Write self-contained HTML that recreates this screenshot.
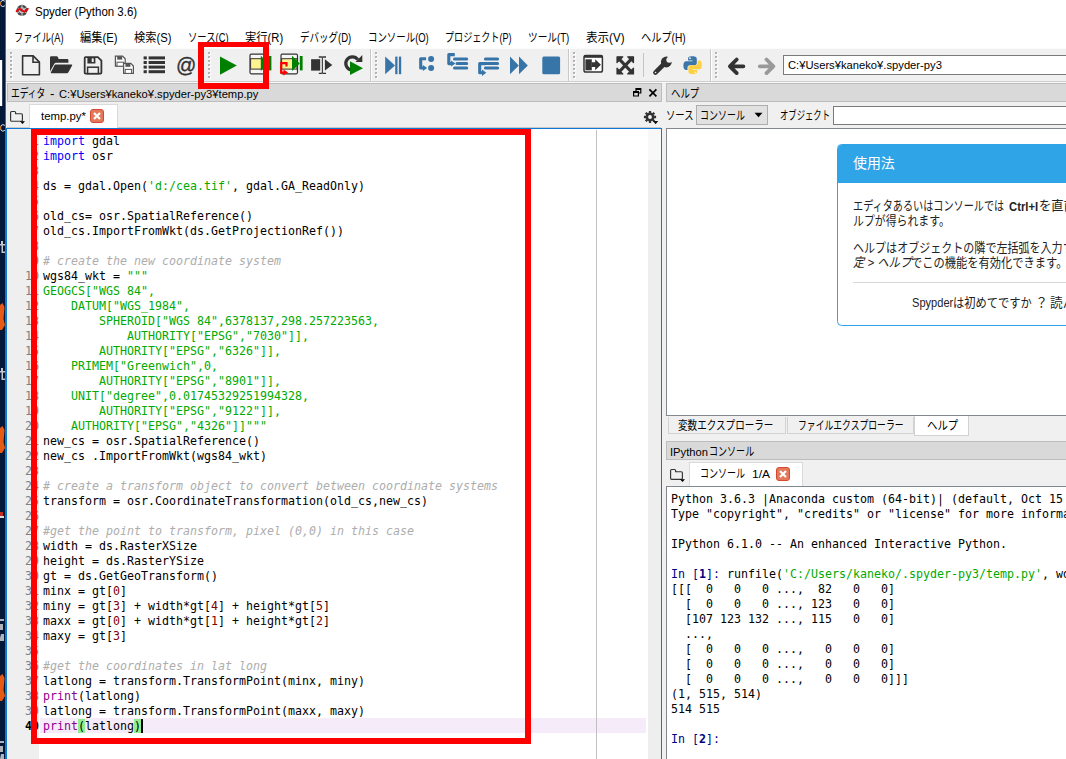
<!DOCTYPE html>
<html lang="ja">
<head>
<meta charset="utf-8">
<title>Spyder (Python 3.6)</title>
<style>
*{box-sizing:border-box;margin:0;padding:0}
html,body{width:1066px;height:759px;overflow:hidden;background:#fff}
body{position:relative;font-family:"Liberation Sans","Noto Sans CJK JP",sans-serif;font-size:12px;color:#000}
.abs,.f{position:absolute}
.f{white-space:nowrap;transform-origin:0 50%;line-height:16px;height:16px;font-size:12px}
#desk{left:0;top:0;width:5px;height:759px;background:#04183a}
#wborder{left:5px;top:0;width:1.100px;height:759px;background:#0a7ad8}
#title{left:7px;top:0;width:1059px;height:27px;background:#fff}
#menu{left:7px;top:27px;width:1059px;height:21px;background:#fff}
#tb{left:6px;top:48px;width:1060px;height:35px;background:#f0f0f0;border-top:1px solid #fbfbfb;border-bottom:1px solid #f8f8f8}
#tb:after{content:"";position:absolute;left:0;right:0;bottom:0;height:1px;background:#cdcdcd}
.dock{position:absolute;background:#d9d9d9;border:1px solid #bdbdbd;height:18px}
.handle{position:absolute;top:52px;width:3px;height:27px;background:repeating-linear-gradient(to bottom,#b2b2b2 0,#b2b2b2 2px,transparent 2px,transparent 4px) 0 0/2px 100% no-repeat,repeating-linear-gradient(to bottom,#fff 0,#fff 2px,transparent 2px,transparent 4px) 1px 1px/2px 100% no-repeat}
.sep{position:absolute;top:49px;width:1px;height:32px;background:#c8c8c8;box-shadow:1px 0 0 #fff}
.mono{font-family:"DejaVu Sans Mono","Liberation Mono","Noto Sans CJK JP",monospace;font-size:11.63px;line-height:15px;white-space:pre}
.ico{position:absolute;overflow:visible}
.kw{color:#0000ff}.st{color:#00aa00}.cm{color:#adadad;font-style:italic}.nu{color:#800000}.bi{color:#900090}
.tab{position:absolute;background:#fff;border:1px solid #dadada;border-bottom:none}
.xbtn{position:absolute;width:14px;height:14px;background:#e4785a;border:1.300px solid #d8482f;border-radius:3px}
.pm{background:#90ee90}.cur{display:inline-block;width:1.500px;height:14px;background:#000;vertical-align:-3px}
.pr{color:#000080}
.red{position:absolute;border:6px solid #ff0000}
</style>
</head>
<body>
<div id="desk" class="abs"></div>
<div id="wborder" class="abs"></div>
<!-- desktop strip details -->
<svg class="ico" style="left:0;top:0" width="6" height="759" viewBox="0 0 6 759">
<g fill="#e8e8e8">
<path d="M4.800 1.200a2.800 3 0 1 0 0 4.600" fill="none" stroke="#e4e6ea" stroke-width="1"/><rect x="0" y="2" width="1.200" height="3" fill="#c9781f"/>
<rect x="0" y="60" width="2.200" height="46" fill="#fdfdfd"/>
<path d="M4.800 125.400a2.800 3.200 0 1 0 0 5" fill="none" stroke="#e4e6ea" stroke-width="1"/><rect x="0" y="126" width="1.200" height="3.600" fill="#c9781f"/>
<path d="M1 241h2v3h2v1.500h-2v6h2v1.500h-3.500v-7.500h-1.500v-1.500h1z" opacity=".85"/>
<path d="M1 368h2v3h2v1.500h-2v6h2v1.500h-3.500v-7.500h-1.500v-1.500h1z" opacity=".85"/>
<path d="M0 619h4v2h-4zM0 624h3v6h-3zM1 634h3v7h-4v-3z" opacity=".75"/>
<path d="M0 741h4v2h-4zM0 746h3v6h-3zM1 754h3v5h-4z" opacity=".75"/>
</g>
<g fill="#e55a14">
<path d="M0 305l2.500-2l2 4l-1 12l1.500 6l-3 5h-2z"/>
<path d="M0 428l2.500-2l2 4l-1 12l1.500 6l-3 5h-2z"/>
<path d="M0 676l2.500-2l2 4l-1 12l1.500 6l-3 5h-2z"/>
</g>
<rect x="0" y="512" width="3" height="4" fill="#c03020"/><rect x="0" y="516" width="4" height="2" fill="#ddd"/>
</svg>
<div id="title" class="abs"></div>
<svg class="ico" style="left:15px;top:3px" width="15" height="15" viewBox="15 3 15 15">
<circle cx="22" cy="10.300" r="5.500" fill="#4a4a4a"/>
<g stroke="#d8d8d8" stroke-width=".9" fill="none"><path d="M22 4.800v11M17.200 7.600l9.600 5.400M17.200 13l9.600-5.400"/><circle cx="22" cy="10.300" r="2.600"/></g>
<path d="M16.600 11.200q2.600-3.800 5.400-.9t5.800-1.600" fill="none" stroke="#e8000c" stroke-width="1.900" stroke-linecap="round"/>
</svg>
<div id="menu" class="abs"></div>
<div id="tb" class="abs"></div>

<!-- toolbar handles / separators -->
<div class="handle" style="left:9.500px"></div>
<div class="handle" style="left:207.600px"></div>
<div class="sep" style="left:370px"></div>
<div class="handle" style="left:375px"></div>
<div class="sep" style="left:568px"></div>
<div class="handle" style="left:573px"></div>
<div class="abs" style="left:643px;top:53px;width:1px;height:24px;background:#c4c4c4"></div>
<div class="sep" style="left:710px"></div>
<div class="handle" style="left:715px"></div>
<svg class="ico" style="left:0;top:48px" width="1066" height="35" viewBox="0 48 1066 35">
<!-- new file -->
<path d="M22.6 55.9h10.6l6.2 6.2v12.6h-16.8z" fill="none" stroke="#333" stroke-width="1.6" stroke-linejoin="round"/>
<path d="M33 56v6.3h6.3" fill="none" stroke="#333" stroke-width="1.6"/>
<!-- open folder -->
<path d="M50 57.5q0-1.2 1.2-1.2h5.4q1 0 1.4 1l0.6 1.6h8.6q1.2 0 1.2 1.2v2.6h-12.2q-1.4 0-2 1.2l-4.2 7.6z" fill="#333"/>
<path d="M55.6 64.4h16q1 0 0.5 1l-3.8 7q-.4.8-1.4.8h-15.5q-1 0-.5-1l3.6-7q.4-.8 1.1-.8z" fill="#333"/>
<!-- save -->
<path d="M85.6 57.1h12.2l3.6 3.6v12q0 .9-.9.9h-14.9q-.9 0-.9-.9v-14.700q0-.9.9-.9z" fill="none" stroke="#333" stroke-width="1.8"/>
<path d="M87.400 57.300h8v6.200h-8z" fill="#333"/>
<rect x="91.700" y="58.400" width="2" height="3.600" fill="#f0f0f0"/>
<rect x="87.600" y="67.200" width="10.800" height="6.400" fill="#f0f0f0" stroke="#333" stroke-width="1.500"/>
<!-- save all -->
<g fill="#fafafa" stroke="#555" stroke-width="1.200">
<path d="M115.400 56.200h7.200l2.600 2.600v7.400h-9.800z"/>
<path d="M123.600 63.400h7.200l2.600 2.600v7.400h-9.800z"/>
</g>
<g fill="#555"><rect x="117.200" y="56.200" width="5" height="3.400"/><rect x="125.400" y="63.400" width="5" height="3.400"/></g>
<g fill="#fff" stroke="#555" stroke-width="1"><rect x="117" y="62.200" width="6.400" height="4"/><rect x="125.200" y="69.400" width="6.400" height="4"/></g>
<!-- list -->
<g fill="#333">
<rect x="143.600" y="56.400" width="3.200" height="3"/><rect x="148.600" y="56.400" width="16.400" height="3"/>
<rect x="143.600" y="61" width="3.200" height="3"/><rect x="148.600" y="61" width="16.400" height="3"/>
<rect x="143.600" y="65.600" width="3.200" height="3"/><rect x="148.600" y="65.600" width="16.400" height="3"/>
<rect x="143.600" y="70.200" width="3.200" height="3"/><rect x="148.600" y="70.200" width="16.400" height="3"/>
</g>
<!-- @ -->
<text x="176" y="72" font-family="Liberation Sans, sans-serif" font-size="20" fill="#333" stroke="#333" stroke-width=".35">@</text>
<!-- run -->
<path d="M220 56.500l16.800 9.100l-16.800 9.100z" fill="#008000"/>
<!-- run cell -->
<rect x="250" y="54.200" width="16.500" height="19.600" rx="1.200" fill="#f6f6f6" stroke="#333" stroke-width="1.200"/>
<rect x="250.600" y="58.700" width="15.300" height="10.400" fill="#fff291" stroke="#333" stroke-width="1"/>
<path d="M260.800 55.800l7.800 7.600l-7.800 7.600z" fill="#008000"/><rect x="268.600" y="56" width="2.800" height="14.400" fill="#008000"/>
<!-- run cell advance -->
<rect x="281" y="54.200" width="16.500" height="19.600" rx="1.200" fill="#f6f6f6" stroke="#333" stroke-width="1.200"/>
<rect x="281.600" y="58.700" width="15.300" height="10.400" fill="#fff291" stroke="#333" stroke-width="1"/>
<path d="M292 55.800l7.800 7.600l-7.800 7.600z" fill="#008000"/><rect x="299.800" y="56" width="2.800" height="14.400" fill="#008000"/>
<path d="M286.500 66.400v-3.300h-5.300v9.500h3" fill="none" stroke="#ff0000" stroke-width="2.200"/>
<path d="M283.500 69.600l4.600 3l-4.600 3z" fill="#ff0000"/>
<!-- run selection -->
<rect x="311.100" y="59.200" width="9.100" height="11.400" fill="#333"/>
<path d="M318.800 57h2.600q1 0 1 .8q0-.8 1-.8h2.600M318.800 73.400h2.600q1 0 1-.8q0 .8 1 .8h2.600" fill="none" stroke="#333" stroke-width="1.300"/>
<path d="M322.400 57.400v15.600" fill="none" stroke="#444" stroke-width="1.200"/>
<path d="M324.900 59.300l7.400 5.650l-7.400 5.650z" fill="#333"/>
<!-- rerun -->
<path d="M357.800 59.600A6.600 6.600 0 1 0 351.250 69.900" fill="none" stroke="#333" stroke-width="3.200"/>
<path d="M362.300 55.100v6.800h-6.800z" fill="#333"/>
<path d="M350 61.200l13 7l-13 6.900z" fill="#008000"/>
<!-- debug -->
<g fill="#3775a9">
<path d="M385.200 56.600l9.800 8.800l-9.800 8.800z"/><rect x="395.200" y="56.600" width="2.300" height="17.600"/><rect x="398.900" y="56.600" width="2.300" height="17.600"/>
<!-- step -->
<circle cx="431.100" cy="59.100" r="3"/><circle cx="431.100" cy="67.900" r="3"/>
<path d="M426.100 58.800h-5.400v9.200h3" fill="none" stroke="#3775a9" stroke-width="3.100" stroke-linejoin="round"/>
<path d="M422.900 64.900l4.300 3.100l-4.300 3.100z"/>
<!-- step into -->
<g stroke="#3775a9" stroke-width="3" stroke-linecap="round"><path d="M454.500 59.100h12.200M457 63.500h9.700M454.500 68h12.200"/></g>
<path d="M454.800 54.600h-6v9h3" fill="none" stroke="#3775a9" stroke-width="3.100" stroke-linejoin="round"/>
<path d="M451.100 60.400l4.300 3.100l-4.300 3.100z"/>
<!-- step return -->
<g stroke="#3775a9" stroke-width="3" stroke-linecap="round"><path d="M485.400 59.100h12.200M485.400 63.500h12.200M485.400 68h12.200"/></g>
<path d="M485.400 63.600h-5.700v9.100h3" fill="none" stroke="#3775a9" stroke-width="3.100" stroke-linejoin="round"/>
<path d="M482 69.500l4.300 3.200l-4.300 3.200z"/>
<!-- continue -->
<path d="M510 56.600l8.800 8.800l-8.800 8.800z"/><path d="M519 56.600l8.800 8.800l-8.800 8.800z"/>
<!-- stop -->
<rect x="542.300" y="56.600" width="17.800" height="17.700" rx="1.500"/>
</g>
<!-- maximize pane -->
<rect x="584" y="55.400" width="18.400" height="16.600" rx="1.800" fill="#fff" stroke="#333" stroke-width="1.500"/>
<rect x="584" y="55" width="18.400" height="2.800" fill="#333"/>
<rect x="585.400" y="59.300" width="6.400" height="11" fill="#333"/>
<path d="M591.500 62.300h3.700v-3l5.700 5.500l-5.700 5.500v-3.400h-3.700z" fill="#333"/>
<!-- fullscreen -->
<g fill="#333" stroke="#333" stroke-width="1.200" stroke-linejoin="round">
<path d="M617 56.800h5.800l-5.800 5.800z"/><path d="M633.500 56.800h-5.800l5.800 5.800z"/><path d="M617 74h5.800l-5.800-5.800z"/><path d="M633.500 74h-5.800l5.800-5.800z"/>
</g>
<path d="M619.500 59.300l11.500 12.200M631 59.300l-11.500 12.200" stroke="#333" stroke-width="3.200" fill="none"/>
<!-- wrench -->
<path d="M655.400 72.600l8.600-8.600" stroke="#333" stroke-width="4.600" stroke-linecap="round" fill="none"/>
<circle cx="666.300" cy="62" r="5.400" fill="#333"/>
<circle cx="669.200" cy="59.800" r="2.900" fill="#f0f0f0"/>
<path d="M669 60l5.400-2.800" stroke="#f0f0f0" stroke-width="5.400" fill="none"/>
<circle cx="655.500" cy="72.500" r=".8" fill="#f0f0f0"/>
<!-- python -->
<path d="M692.400 56.300c-4.400 0-4.300 1.900-4.300 1.900v2.300h4.500v.8h-6.400s-2.800-.3-2.800 4.300s2.500 4.400 2.500 4.400h1.600v-2.300s-.1-2.500 2.500-2.500h4.400s2.400 0 2.400-2.300v-4s.4-2.600-4.400-2.600z" fill="#3b77a8"/>
<circle cx="690" cy="58.200" r=".9" fill="#f0f0f0"/>
<path d="M692.800 74.200c4.400 0 4.300-1.900 4.300-1.900v-2.300h-4.500v-.8h6.400s2.800.3 2.800-4.300s-2.500-4.400-2.500-4.400h-1.600v2.300s.1 2.500-2.500 2.500h-4.400s-2.400 0-2.400 2.300v4s-.4 2.600 4.400 2.600z" fill="#ffd040"/>
<circle cx="695.200" cy="72.300" r=".9" fill="#f0f0f0"/>
<!-- back / forward -->
<path d="M743.400 66.300h-12M736.700 59.500l-6.800 6.800l6.800 6.800" fill="none" stroke="#333" stroke-width="3.800" stroke-linejoin="round" stroke-linecap="round"/>
<path d="M759.800 66.300h12M766.500 59.500l6.800 6.800l-6.800 6.800" fill="none" stroke="#999" stroke-width="3.800" stroke-linejoin="round" stroke-linecap="round"/>
</svg>
<!-- path combobox -->
<div class="abs" style="left:783px;top:55px;width:300px;height:20px;background:#fff;border:1px solid #7a7a7a"></div>

<!-- ===== editor pane ===== -->
<div class="abs" style="left:6px;top:83px;width:1060px;height:676px;background:#f0f0f0"></div>
<div class="dock" style="left:7px;top:83px;width:654.500px;height:18.500px"></div>
<svg class="ico" style="left:630px;top:86px" width="30" height="14" viewBox="630 86 30 14">
<path d="M636 88.700h4.800v4.300h-4.800zM636 89.500h4.800" fill="none" stroke="#000" stroke-width="1.200"/>
<path d="M633.600 91.600h4.800v4.400h-4.800z" fill="#d9d9d9" stroke="#000" stroke-width="1.200"/>
<path d="M633.600 92.300h4.800" stroke="#000" stroke-width="1.400"/>
<path d="M649.400 89.400l7 7M656.400 89.400l-7 7" stroke="#000" stroke-width="1.700"/>
</svg>
<!-- tab row -->
<div class="abs" style="left:7px;top:127.200px;width:654px;height:1px;background:#c9c9c9"></div>
<svg class="ico" style="left:9px;top:109px" width="18" height="16" viewBox="9 109 18 16">
<path d="M11.600 111.500h3q1 0 1 1v1.200h5.800q1 0 1 1v5.600q0 1-1 1h-9.800q-1 0-1-1v-7.800q0-1 1-1z" fill="none" stroke="#333" stroke-width="1.150"/>
<path d="M20 121.200h5l-2.500 2.800z" fill="#000"/>
</svg>
<div class="tab" style="left:29px;top:104px;width:88.500px;height:24.500px"></div>
<div class="xbtn" style="left:90px;top:109px"></div>
<svg class="ico" style="left:90px;top:109px" width="14" height="14" viewBox="0 0 14 14"><path d="M4 4l6 6M10 4l-6 6" stroke="#fff" stroke-width="2.200"/></svg>
<svg class="ico" style="left:643px;top:110px" width="18" height="16" viewBox="643 110 18 16">
<g fill="#333"><circle cx="650" cy="117" r="4.400"/>
<g stroke="#333" stroke-width="2.300"><path d="M650 110.900v12.200M643.900 117h12.200M645.700 112.700l8.600 8.600M654.300 112.700l-8.600 8.600"/></g></g>
<circle cx="650" cy="117" r="1.900" fill="#f4f4f4"/>
<path d="M652.900 121h5.400l-2.700 3.300z" fill="#111"/>
</svg>
<!-- editor body -->
<div class="abs" style="left:6px;top:128px;width:656.200px;height:640px;background:#fff;border-top:1.200px solid #0f7ad6;border-right:1.300px solid #0f7ad6;border-left:1px solid #0f7ad6"></div>
<div class="abs" style="left:7px;top:129.200px;width:32px;height:640px;background:#efefef"></div>
<div class="abs" style="left:40px;top:718px;width:606px;height:15px;background:#f6ebf9"></div>
<div class="abs" style="left:596px;top:129.500px;width:1px;height:640px;background:#c0c0c0"></div>
<div class="abs" style="left:648px;top:129px;width:13px;height:640px;background:#eeeeee"></div>
<div class="abs" style="left:648px;top:129px;width:13px;height:30.500px;background:#f8f8f8"></div>
<pre class="mono abs" style="left:8px;top:134px;width:31px;text-align:right;color:#808080">1
2
3
4
5
6
7
8
9
10
11
12
13
14
15
16
17
18
19
20
21
22
23
24
25
26
27
28
29
30
31
32
33
34
35
36
37
38
39
<b style="color:#000">40</b></pre>
<pre class="mono abs" style="left:43px;top:134px"><span class="kw">import</span> gdal
<span class="kw">import</span> osr

ds = gdal.Open(<span class="st">'d:/cea.tif'</span>, gdal.GA_ReadOnly)

old_cs= osr.SpatialReference()
old_cs.ImportFromWkt(ds.GetProjectionRef())

<span class="cm"># create the new coordinate system</span>
wgs84_wkt = <span class="st">"""</span>
<span class="st">GEOGCS["WGS 84",</span>
<span class="st">    DATUM["WGS_1984",</span>
<span class="st">        SPHEROID["WGS 84",6378137,298.257223563,</span>
<span class="st">            AUTHORITY["EPSG","7030"]],</span>
<span class="st">        AUTHORITY["EPSG","6326"]],</span>
<span class="st">    PRIMEM["Greenwich",0,</span>
<span class="st">        AUTHORITY["EPSG","8901"]],</span>
<span class="st">    UNIT["degree",0.01745329251994328,</span>
<span class="st">        AUTHORITY["EPSG","9122"]],</span>
<span class="st">    AUTHORITY["EPSG","4326"]]"""</span>
new_cs = osr.SpatialReference()
new_cs .ImportFromWkt(wgs84_wkt)

<span class="cm"># create a transform object to convert between coordinate systems</span>
transform = osr.CoordinateTransformation(old_cs,new_cs)

<span class="cm">#get the point to transform, pixel (0,0) in this case</span>
width = ds.RasterXSize
height = ds.RasterYSize
gt = ds.GetGeoTransform()
minx = gt[<span class="nu">0</span>]
miny = gt[<span class="nu">3</span>] + width*gt[<span class="nu">4</span>] + height*gt[<span class="nu">5</span>]
maxx = gt[<span class="nu">0</span>] + width*gt[<span class="nu">1</span>] + height*gt[<span class="nu">2</span>]
maxy = gt[<span class="nu">3</span>]

<span class="cm">#get the coordinates in lat long</span>
latlong = transform.TransformPoint(minx, miny)
<span class="bi">print</span>(latlong)
latlong = transform.TransformPoint(maxx, maxy)
<span class="bi">print</span><span class="pm">(</span>latlong<span class="pm">)</span><span class="cur"></span></pre>

<!-- ===== help pane ===== -->
<div class="dock" style="left:666px;top:83px;width:410px;height:18.500px"></div>
<div class="abs" style="left:696px;top:105px;width:72px;height:20px;background:#e1e1e1;border:1px solid #adadad"></div>
<svg class="ico" style="left:754px;top:112px" width="9" height="6" viewBox="0 0 9 6"><path d="M0.500 .8h8l-4 4.400z" fill="#000"/></svg>
<div class="abs" style="left:833px;top:105.500px;width:250px;height:19.500px;background:#fff;border:1px solid #7a7a7a"></div>
<div class="abs" style="left:666px;top:128px;width:410px;height:288px;background:#fff;border:1px solid #828790"></div>
<div class="abs" style="left:837px;top:144px;width:260px;height:182px;border:1px solid #2fa4e7;border-radius:4.500px;background:#fff;overflow:hidden">
<div style="height:38px;background:#2fa4e7"></div>
</div>
<div class="abs" style="left:853px;top:282px;width:220px;height:1px;background:#d8d8d8"></div>
<!-- bottom tabs -->
<div class="abs" style="left:668px;top:417px;width:117.500px;height:17px;background:#f0f0f0;border:1px solid #d2d2d2;border-top:none"></div>
<div class="abs" style="left:786.500px;top:417px;width:127px;height:17px;background:#f0f0f0;border:1px solid #d2d2d2;border-top:none"></div>
<div class="abs" style="left:913.500px;top:416px;width:55px;height:20px;background:#fff;border:1px solid #d2d2d2;border-top:none"></div>
<!-- ipython console -->
<div class="dock" style="left:666px;top:441.300px;width:410px;height:18.500px"></div>
<svg class="ico" style="left:668.800px;top:467.300px" width="18" height="16" viewBox="9 109 18 16">
<path d="M11.600 111.500h3q1 0 1 1v1.200h5.800q1 0 1 1v5.600q0 1-1 1h-9.800q-1 0-1-1v-7.800q0-1 1-1z" fill="none" stroke="#333" stroke-width="1.150"/>
<path d="M20 121.200h5l-2.500 2.800z" fill="#000"/>
</svg>
<div class="tab" style="left:689px;top:462.200px;width:113.500px;height:24.300px"></div>
<div class="xbtn" style="left:775.500px;top:467px"></div>
<svg class="ico" style="left:775.500px;top:467px" width="14" height="14" viewBox="0 0 14 14"><path d="M4 4l6 6M10 4l-6 6" stroke="#fff" stroke-width="2.200"/></svg>
<div class="abs" style="left:666px;top:486px;width:410px;height:290px;background:#fff;border:1px solid #828790"></div>
<pre class="mono abs" style="left:671px;top:492px">Python 3.6.3 |Anaconda custom (64-bit)| (default, Oct 15 2017, 03:27:45) [MSC v.1900 64 bit (AMD64)]
Type "copyright", "credits" or "license" for more information.

IPython 6.1.0 -- An enhanced Interactive Python.

<span class="pr">In [<b>1</b>]:</span> runfile(<span class="st">'C:/Users/kaneko/.spyder-py3/temp.py'</span>, wdir=<span class="st">'C:/Users/kaneko/.spyder-py3'</span>)
[[[  0   0   0 ...,  82   0   0]
  [  0   0   0 ..., 123   0   0]
  [107 123 132 ..., 115   0   0]
  ...,
  [  0   0   0 ...,   0   0   0]
  [  0   0   0 ...,   0   0   0]
  [  0   0   0 ...,   0   0   0]]]
(1, 515, 514)
514 515

<span class="pr">In [<b>2</b>]:</span> </pre>

<span class="f" id="L0" style="left:35px;top:3.87px;font-size:12.5px;transform:scaleX(0.9189);">Spyder (Python 3.6)</span>
<span class="f" id="L1" style="left:14px;top:30.23px;font-size:12px;transform:scaleX(0.7734);">ファイル(A)</span>
<span class="f" id="L2" style="left:80px;top:30.23px;font-size:12px;transform:scaleX(0.9375);">編集(E)</span>
<span class="f" id="L3" style="left:134px;top:30.23px;font-size:12px;transform:scaleX(0.9375);">検索(S)</span>
<span class="f" id="L4" style="left:188px;top:30.23px;font-size:12px;transform:scaleX(0.7788);">ソース(C)</span>
<span class="f" id="L5" style="left:245px;top:30.23px;font-size:12px;transform:scaleX(0.9390);">実行(R)</span>
<span class="f" id="L6" style="left:300px;top:30.23px;font-size:12px;transform:scaleX(0.7923);">デバッグ(D)</span>
<span class="f" id="L7" style="left:368px;top:30.23px;font-size:12px;transform:scaleX(0.7857);">コンソール(O)</span>
<span class="f" id="L8" style="left:445px;top:30.23px;font-size:12px;transform:scaleX(0.7557);">プロジェクト(P)</span>
<span class="f" id="L9" style="left:528px;top:30.23px;font-size:12px;transform:scaleX(0.8039);">ツール(T)</span>
<span class="f" id="L10" style="left:585.5px;top:30.23px;font-size:12px;transform:scaleX(0.9625);">表示(V)</span>
<span class="f" id="L11" style="left:640.5px;top:30.23px;font-size:12px;transform:scaleX(0.8491);">ヘルプ(H)</span>
<span class="f" id="L12" style="left:788px;top:56.8px;font-size:11.5px;transform:scaleX(0.9747);">C:¥Users¥kaneko¥.spyder-py3</span>
<span class="f" id="L13" style="left:10.8px;top:85.73px;font-size:12px;transform:scaleX(0.7277);">エディタ</span>
<span class="f" id="L14" style="left:49.8px;top:85.73px;font-size:12px;transform:scaleX(1.1000);">-</span>
<span class="f" id="L15" style="left:58.7px;top:85.7px;font-size:11.5px;transform:scaleX(0.9712);">C:¥Users¥kaneko¥.spyder-py3¥temp.py</span>
<span class="f" id="L16" style="left:40.8px;top:107.9px;font-size:11.5px;transform:scaleX(0.9889);">temp.py*</span>
<span class="f" id="L17" style="left:671.2px;top:85.73px;font-size:12px;transform:scaleX(0.7861);">ヘルプ</span>
<span class="f" id="L18" style="left:666px;top:107.63px;font-size:12px;transform:scaleX(0.7771);">ソース</span>
<span class="f" id="L19" style="left:699.5px;top:107.63px;font-size:12px;transform:scaleX(0.7483);">コンソール</span>
<span class="f" id="L20" style="left:779.8px;top:107.63px;font-size:12px;transform:scaleX(0.6944);">オブジェクト</span>
<span class="f" id="L21" style="left:677.8px;top:417.93px;font-size:12px;transform:scaleX(0.7975);">変数エクスプローラー</span>
<span class="f" id="L22" style="left:797.9px;top:417.93px;font-size:12px;transform:scaleX(0.7347);">ファイルエクスプローラー</span>
<span class="f" id="L23" style="left:926.6px;top:417.93px;font-size:12px;transform:scaleX(0.8667);">ヘルプ</span>
<span class="f" id="L24" style="left:670.3px;top:443.9px;font-size:11.5px;transform:scaleX(0.9718);">IPython</span>
<span class="f" id="L25" style="left:708.6px;top:443.93px;font-size:12px;transform:scaleX(0.7533);">コンソール</span>
<span class="f" id="L26" style="left:700.3px;top:466.43px;font-size:12px;transform:scaleX(0.7517);">コンソール</span>
<span class="f" id="L27" style="left:752px;top:466.4px;font-size:11.5px;transform:scaleX(1.0471);">1/A</span>
<span class="f" id="L28" style="left:852.9px;top:155.37px;font-size:14px;transform:scaleX(0.9952);color:#fff;">使用法</span>
<span class="f" id="L29" style="left:852.9px;top:198.4px;font-size:13px;transform:scaleX(0.7789);color:#222;">エディタあるいはコンソールでは</span>
<span class="f" id="L30" style="left:1008.7px;top:198.53px;font-size:12px;transform:scaleX(0.9387);color:#222;"><b>Ctrl+I</b></span>
<span class="f" id="L31" style="left:1039px;top:198.4px;font-size:13px;transform:scaleX(0.9487);color:#222;">を直前</span>
<span class="f" id="L32" style="left:852.9px;top:212.8px;font-size:13px;transform:scaleX(0.8371);color:#222;">ルプが得られます。</span>
<span class="f" id="L33" style="left:852.9px;top:239.7px;font-size:13px;transform:scaleX(0.8486);color:#222;">ヘルプはオブジェクトの隣で左括弧を入力</span>
<span class="f" id="L34" style="left:1062.7px;top:239.7px;font-size:13px;transform:scaleX(0.7923);color:#222;">す</span>
<span class="f" id="L35" style="left:852.9px;top:255.0px;font-size:13px;transform:scaleX(0.8716);color:#222;"><i>定 &gt; ヘルプ</i></span>
<span class="f" id="L36" style="left:911.3px;top:255.0px;font-size:13px;transform:scaleX(0.8657);color:#222;">でこの機能を有効化できます。</span>
<span class="f" id="L37" style="left:912.4px;top:295.23px;font-size:12px;transform:scaleX(0.9222);color:#222;">Spypder</span>
<span class="f" id="L38" style="left:953.4px;top:295.1px;font-size:13px;transform:scaleX(0.8659);color:#222;">は初めてですか</span>
<span class="f" id="L39" style="left:1035px;top:295.3px;font-size:13px;transform:scaleX(1.0000);color:#222;">？</span>
<span class="f" id="L40" style="left:1049.7px;top:295.3px;font-size:13px;transform:scaleX(0.9731);color:#222;">読ん</span>
<!-- red annotation rectangles -->
<div class="red" style="left:198px;top:42px;width:71px;height:47.200px;border-width:5.700px 6.200px 6px 6px"></div>
<div class="red" style="left:31px;top:129px;width:500px;height:615px"></div>

</body>
</html>
